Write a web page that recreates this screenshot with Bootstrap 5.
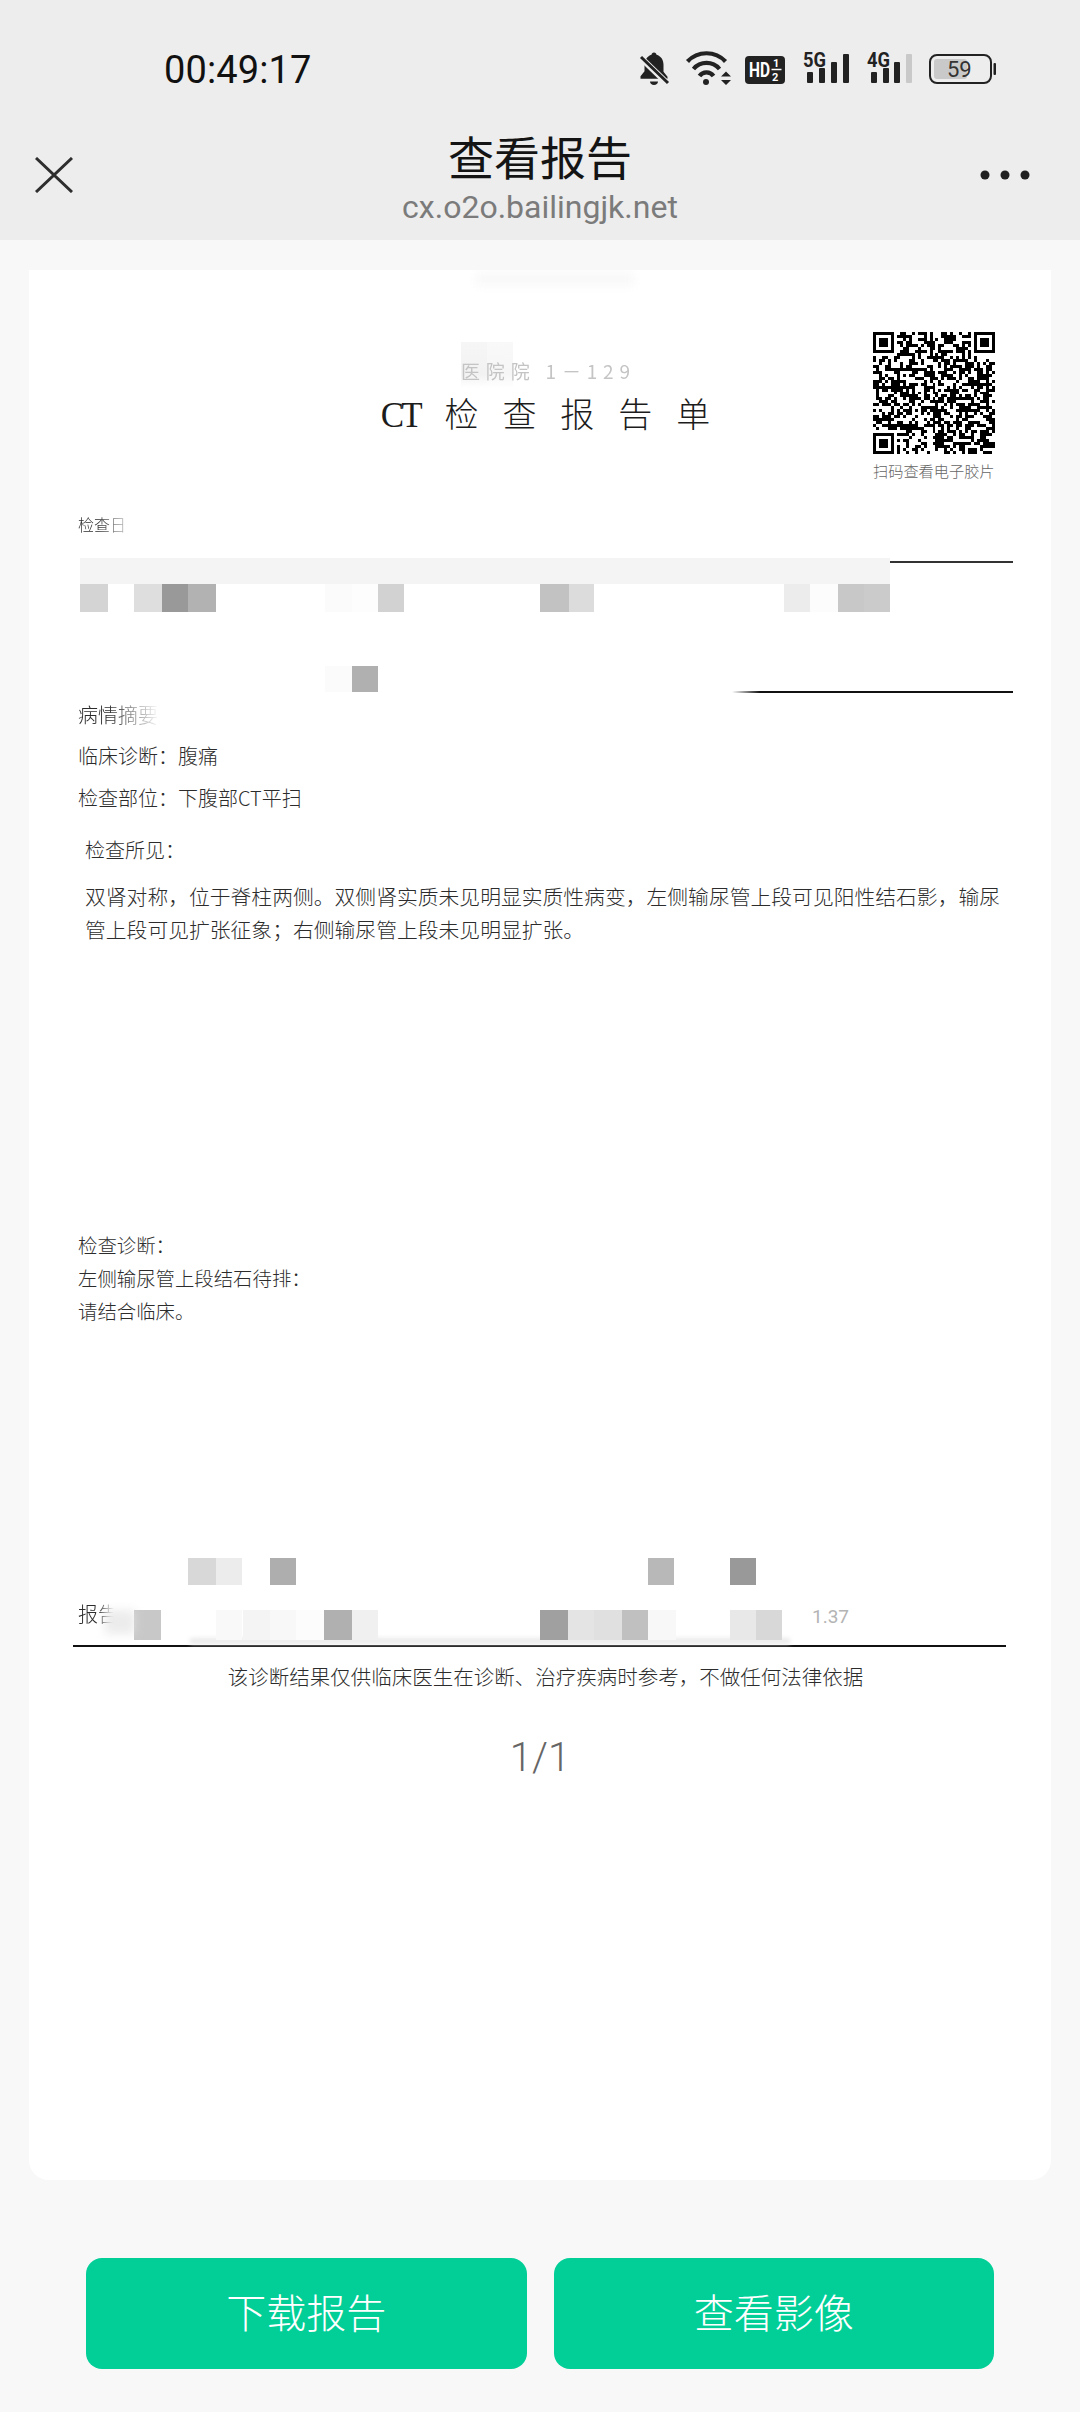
<!doctype html>
<html lang="zh-CN">
<head>
<meta charset="utf-8">
<title>查看报告</title>
<link rel="stylesheet" href="https://cdn.jsdelivr.net/npm/bootstrap@5.3.0/dist/css/bootstrap.min.css">
<style>
html,body{width:1080px;height:2412px;margin:0;overflow:hidden;}
body{background:#f8f8f8;font-family:"Noto Sans CJK SC",sans-serif;}
.top-head{height:240px;background:#ededed;}
.status-row{height:40px;margin-top:50px;padding:0 83px 0 164px;}
.clock{font:400 38px/40px Roboto,sans-serif;color:#111;letter-spacing:.1px;}
.nav-row{display:grid;grid-template-columns:1fr auto 1fr;margin-top:37px;}
.nav-x,.nav-dots{margin-top:30px;display:block;}
.nav-x{margin-left:35px;}
.nav-dots{justify-self:end;margin-right:50px;}
.nav-title{font:400 46px/56px "Noto Sans CJK SC",sans-serif;color:#141414;margin-bottom:4px;text-align:center;}
.nav-url{font:400 32px/40px Roboto,sans-serif;color:#7b7b7b;text-align:center;}
.paper{position:relative;margin:30px 29px 0;height:1910px;background:#fff;border-radius:0 0 20px 20px;padding:62px 38px 0 49px;overflow:hidden;color:#2c2c2c;}
.paper-head{display:grid;grid-template-columns:1fr auto 1fr;height:148px;}
.doc-title{margin-top:61px;font:300 34px/40px "Noto Sans CJK SC",serif;color:#1c1c1c;word-spacing:16.4px;white-space:nowrap;}
.doc-title .ct{font-family:"Liberation Serif",serif;font-size:35px;letter-spacing:-3px;margin-right:1px;}
.qr-box{justify-self:end;width:122px;margin-right:18px;}
.qr-box svg{display:block;width:122px;height:122px;}
.qr-cap{font:300 15.200px/20px "Noto Sans CJK SC",sans-serif;color:#666;white-space:nowrap;margin-top:6px;}
.dline{font:300 20px/33px "Noto Sans CJK SC",sans-serif;color:#2c2c2c;white-space:nowrap;}
.fade-end{-webkit-mask-image:linear-gradient(90deg,#000 20px,transparent 60px);mask-image:linear-gradient(90deg,#000 20px,transparent 60px);}
.fade-long{-webkit-mask-image:linear-gradient(90deg,#000 30px,transparent 82px);mask-image:linear-gradient(90deg,#000 30px,transparent 82px);}
.fade-short{-webkit-mask-image:linear-gradient(90deg,#000 20px,transparent 36px);mask-image:linear-gradient(90deg,#000 20px,transparent 36px);}
.line-check{margin-top:31px;line-height:26px;font-size:16px;}
.info-box{margin-top:24px;height:132px;border-top:2px solid #333;border-bottom:2px solid #111;}
.m5{margin-top:5px}.m8{margin-top:8px}.m9{margin-top:9px}.m19{margin-top:19px}.m14{margin-top:14px}
.m282{margin-top:282px}.m270{margin-top:270px}
.in7{padding-left:7px;}
.finding{font-size:20.8px;padding-left:7px;}
.diag{font-size:19.4px;}
.sign-rule{margin:15px 7px 0 -5px;border-top:2px solid #111;}
.disclaimer{margin-top:13px;text-align:center;font-size:20.5px;}
.page-num{margin-top:40px;margin-right:11px;text-align:center;font:300 40px/50px Roboto,sans-serif;color:#666;}
.mosaic{position:absolute;left:0;top:0;width:1022px;height:1910px;pointer-events:none;}
.action-row{padding:78px 86px 0;gap:27px;}
.act-btn{flex:1 1 0;height:111px;border:0;border-radius:16px;background:#02cf98;color:#fff;padding:0 0 5px;font:300 40px/1 "Noto Sans CJK SC",sans-serif;}
.act-btn:hover{background:#02cf98;color:#fff;}
</style>
</head>
<body>
<header class="top-head d-flex flex-column">
  <div class="status-row d-flex align-items-center justify-content-between">
    <div class="clock">00:49:17</div>
    <svg width="358" height="48" viewBox="640 46 358 48" aria-label="状态栏">
      <path d="M655 52.500c1.500 0 2.500 1 2.500 2.300 4.500 1.300 7 5 7 10v7l4 5v2h-27v-2.500l4-5v-6.500c0-4.800 2.800-8.800 7-10 0-1.300 1-2.300 2.500-2.300z" fill="#222"/>
      <path d="M651 81.500h8c0 2.200-1.800 3.500-4 3.500s-4-1.300-4-3.500z" fill="#222"/>
      <path d="M641 57l28 27" stroke="#ededed" stroke-width="6"/>
      <path d="M642 57l27 26" stroke="#222" stroke-width="3"/>
      <g fill="none" stroke="#222" stroke-width="4.200">
        <path d="M688.500 61.500a26 26 0 0 1 38 0"/>
        <path d="M694.500 69a17 17 0 0 1 26 0"/>
        <path d="M700.500 76a8.500 8.500 0 0 1 14 0"/>
      </g>
      <circle cx="707" cy="82" r="3" fill="#222"/>
      <path d="M727 71.500l5 5h-10zM727 85l5-5h-10z" fill="#222"/>
      <rect x="746" y="56" width="40" height="28" rx="4" fill="#222"/>
      <text x="750" y="77" font-family="Roboto,sans-serif" font-weight="700" font-size="20" fill="#fff" textLength="21" lengthAdjust="spacingAndGlyphs">HD</text>
      <text x="774" y="67" font-family="Roboto,sans-serif" font-weight="700" font-size="11" fill="#fff">1</text>
      <path d="M772.500 69.500h10" stroke="#fff" stroke-width="1.500"/>
      <text x="773" y="81" font-family="Roboto,sans-serif" font-weight="700" font-size="11" fill="#fff">2</text>
      <text x="804" y="67" font-family="Roboto,sans-serif" font-weight="700" font-size="21" fill="#222" textLength="23" lengthAdjust="spacingAndGlyphs">5G</text>
      <g fill="#222"><rect x="808" y="72" width="6" height="11" rx="1"/><rect x="820" y="68" width="6" height="15" rx="1"/><rect x="832" y="62" width="6" height="21" rx="1"/><rect x="844" y="54" width="6" height="29" rx="1"/></g>
      <text x="868" y="67" font-family="Roboto,sans-serif" font-weight="700" font-size="21" fill="#222" textLength="23" lengthAdjust="spacingAndGlyphs">4G</text>
      <g fill="#222"><rect x="872" y="72" width="6" height="11" rx="1"/><rect x="884" y="68" width="6" height="15" rx="1"/><rect x="895" y="62" width="6" height="21" rx="1"/></g>
      <rect x="907" y="54" width="6" height="29" rx="1" fill="#c9c9c9"/>
      <rect x="931" y="55" width="61" height="28" rx="7" fill="none" stroke="#222" stroke-width="2"/>
      <rect x="935" y="59" width="33" height="20" rx="3" fill="#c9c9c9"/>
      <rect x="994.500" y="63" width="2.500" height="12" rx="1" fill="#222"/>
      <text x="948" y="77" font-family="Roboto,sans-serif" font-size="22" fill="#333">59</text>
    </svg>
  </div>
  <div class="nav-row">
    <svg class="nav-x" width="38" height="36" viewBox="0 0 38 36" aria-label="关闭"><path d="M1 1l36 34M37 1L1 35" stroke="#2e2e2e" stroke-width="3" fill="none"/></svg>
    <div>
      <div class="nav-title">查看报告</div>
      <div class="nav-url">cx.o2o.bailingjk.net</div>
    </div>
    <svg class="nav-dots" width="50" height="36" viewBox="0 0 50 36" aria-label="更多"><circle cx="5" cy="18" r="4.500" fill="#222"/><circle cx="25" cy="18" r="4.500" fill="#222"/><circle cx="45" cy="18" r="4.500" fill="#222"/></svg>
  </div>
</header>

<main class="paper">
  <div class="paper-head">
    <div></div>
    <div class="doc-title"><span class="ct">CT</span> 检 查 报 告 单</div>
    <div class="qr-box">
      <svg id="qr" viewBox="0 0 41 41" shape-rendering="crispEdges" aria-label="二维码"><path id="qrp" fill="#000" d=""/></svg>
      <div class="qr-cap">扫码查看电子胶片</div>
    </div>
  </div>
  <div class="dline line-check fade-end">检查日</div>
  <div class="info-box"></div>
  <div class="dline m5 fade-long">病情摘要:</div>
  <div class="dline m8">临床诊断：腹痛</div>
  <div class="dline m9">检查部位：下腹部CT平扫</div>
  <div class="dline m19 in7">检查所见：</div>
  <div class="dline m14 finding">双肾对称，位于脊柱两侧。双侧肾实质未见明显实质性病变，左侧输尿管上段可见阳性结石影，输尿</div>
  <div class="dline finding">管上段可见扩张征象；右侧输尿管上段未见明显扩张。</div>
  <div class="dline m282 diag">检查诊断：</div>
  <div class="dline diag">左侧输尿管上段结石待排：</div>
  <div class="dline diag">请结合临床。</div>
  <div class="dline m270 fade-short">报告</div>
  <div class="sign-rule"></div>
  <div class="dline disclaimer">该诊断结果仅供临床医生在诊断、治疗疾病时参考，不做任何法律依据</div>
  <div class="page-num">1/1</div>

  <svg class="mosaic" viewBox="29 270 1022 1910" aria-hidden="true">
    <defs>
      <filter id="b1"><feGaussianBlur stdDeviation="0.7"/></filter>
      <filter id="b6" x="-30%" y="-100%" width="160%" height="300%"><feGaussianBlur stdDeviation="5"/></filter>
      <filter id="b3" x="-10%" y="-100%" width="120%" height="300%"><feGaussianBlur stdDeviation="2"/></filter>
      <linearGradient id="gv" x1="0" y1="0" x2="0" y2="1"><stop offset="0" stop-color="#f6f6f6"/><stop offset=".7" stop-color="#f2f2f2"/><stop offset="1" stop-color="#fff"/></linearGradient>
      <linearGradient id="wh" x1="0" x2="1" y1="0" y2="0"><stop offset=".96" stop-color="#fff"/><stop offset="1" stop-color="#fff" stop-opacity="0"/></linearGradient>
    </defs>
    <rect x="475" y="272" width="160" height="14" fill="#f6f6f6" opacity=".7" filter="url(#b6)"/>
    <rect x="461" y="342" width="26" height="46" fill="url(#gv)"/>
    <rect x="487" y="342" width="26" height="46" fill="url(#gv)" opacity=".7"/>
    <text x="461" y="379" font-family="'Noto Sans CJK SC',sans-serif" font-size="19" fill="#c4c4c4" filter="url(#b1)" textLength="169">医院院 1－129</text>
    <rect x="60" y="555" width="826" height="12" fill="url(#wh)"/>
    <rect x="60" y="686" width="700" height="10" fill="url(#wh)"/>
    <rect x="80" y="558" width="810" height="26" fill="#f4f4f4" filter="url(#b1)"/>
    <rect x="190" y="1638" width="600" height="6" fill="#eaeaea" filter="url(#b3)"/>
    <g filter="url(#b1)">
      <rect x="80" y="584" width="28" height="28" fill="#d4d4d4"/><rect x="134" y="584" width="28" height="28" fill="#dedede"/><rect x="162" y="584" width="26" height="28" fill="#999"/><rect x="188" y="584" width="28" height="28" fill="#b2b2b2"/>
      <rect x="325" y="584" width="27" height="28" fill="#fbfbfb"/><rect x="352" y="584" width="26" height="28" fill="#fdfdfd"/><rect x="378" y="584" width="26" height="28" fill="#d2d2d2"/>
      <rect x="540" y="584" width="29" height="28" fill="#c2c2c2"/><rect x="569" y="584" width="25" height="28" fill="#dcdcdc"/>
      <rect x="784" y="584" width="26" height="28" fill="#ececec"/><rect x="810" y="584" width="28" height="28" fill="#fcfcfc"/><rect x="838" y="584" width="26" height="28" fill="#c8c8c8"/><rect x="864" y="584" width="26" height="28" fill="#cbcbcb"/>
      <rect x="325" y="666" width="27" height="26" fill="#fbfbfb"/><rect x="352" y="666" width="26" height="26" fill="#b0b0b0"/>
      <rect x="188" y="1558" width="28" height="27" fill="#d8d8d8"/><rect x="216" y="1558" width="26" height="27" fill="#ececec"/><rect x="270" y="1558" width="26" height="27" fill="#aeaeae"/>
      <rect x="648" y="1558" width="26" height="27" fill="#b8b8b8"/><rect x="730" y="1558" width="26" height="27" fill="#999"/>
      <rect x="134" y="1610" width="27" height="30" fill="#c8c8c8"/><rect x="216" y="1610" width="26" height="30" fill="#f9f9f9"/><rect x="243" y="1610" width="27" height="30" fill="#f4f4f4"/><rect x="270" y="1610" width="26" height="30" fill="#f8f8f8"/><rect x="296" y="1610" width="28" height="30" fill="#fcfcfc"/><rect x="324" y="1610" width="28" height="30" fill="#b0b0b0"/><rect x="352" y="1610" width="26" height="30" fill="#f0f0f0"/>
      <rect x="540" y="1610" width="28" height="30" fill="#a0a0a0"/><rect x="568" y="1610" width="26" height="30" fill="#e4e4e4"/><rect x="594" y="1610" width="28" height="30" fill="#e0e0e0"/><rect x="622" y="1610" width="26" height="30" fill="#c0c0c0"/><rect x="648" y="1610" width="28" height="30" fill="#f8f8f8"/>
      <rect x="730" y="1610" width="26" height="30" fill="#e8e8e8"/><rect x="756" y="1610" width="26" height="30" fill="#d8d8d8"/>
    </g>
    <rect x="105" y="1610" width="30" height="24" fill="#e4e4e4" filter="url(#b6)" opacity=".7"/>
    <text x="812" y="1623" font-family="Roboto,sans-serif" font-size="19" fill="#b4b4b4">1.37</text>
  </svg>
</main>

<footer class="action-row d-flex">
  <button type="button" class="btn act-btn">下载报告</button>
  <button type="button" class="btn act-btn">查看影像</button>
</footer>

<script>
(function(){
  var n=41,m=[],seed=7331,i,x,y;
  function rnd(){seed=(seed*16807)%2147483647;return seed/2147483647;}
  for(y=0;y<n;y++){m[y]=[];for(x=0;x<n;x++){m[y][x]=rnd()<0.5;}}
  function finder(ox,oy){
    for(y=-1;y<8;y++)for(x=-1;x<8;x++){
      var px=ox+x,py=oy+y;if(px<0||py<0||px>=n||py>=n)continue;
      var on=x>=0&&x<7&&y>=0&&y<7&&(x==0||x==6||y==0||y==6||(x>=2&&x<=4&&y>=2&&y<=4));
      m[py][px]=on;
    }
  }
  finder(0,0);finder(n-7,0);finder(0,n-7);
  var d='';
  for(y=0;y<n;y++)for(x=0;x<n;x++)if(m[y][x])d+='M'+x+' '+y+'h1v1h-1z';
  document.getElementById('qrp').setAttribute('d',d);
})();
</script>
<script src="https://cdn.jsdelivr.net/npm/bootstrap@5.3.0/dist/js/bootstrap.bundle.min.js"></script>
</body>
</html>
